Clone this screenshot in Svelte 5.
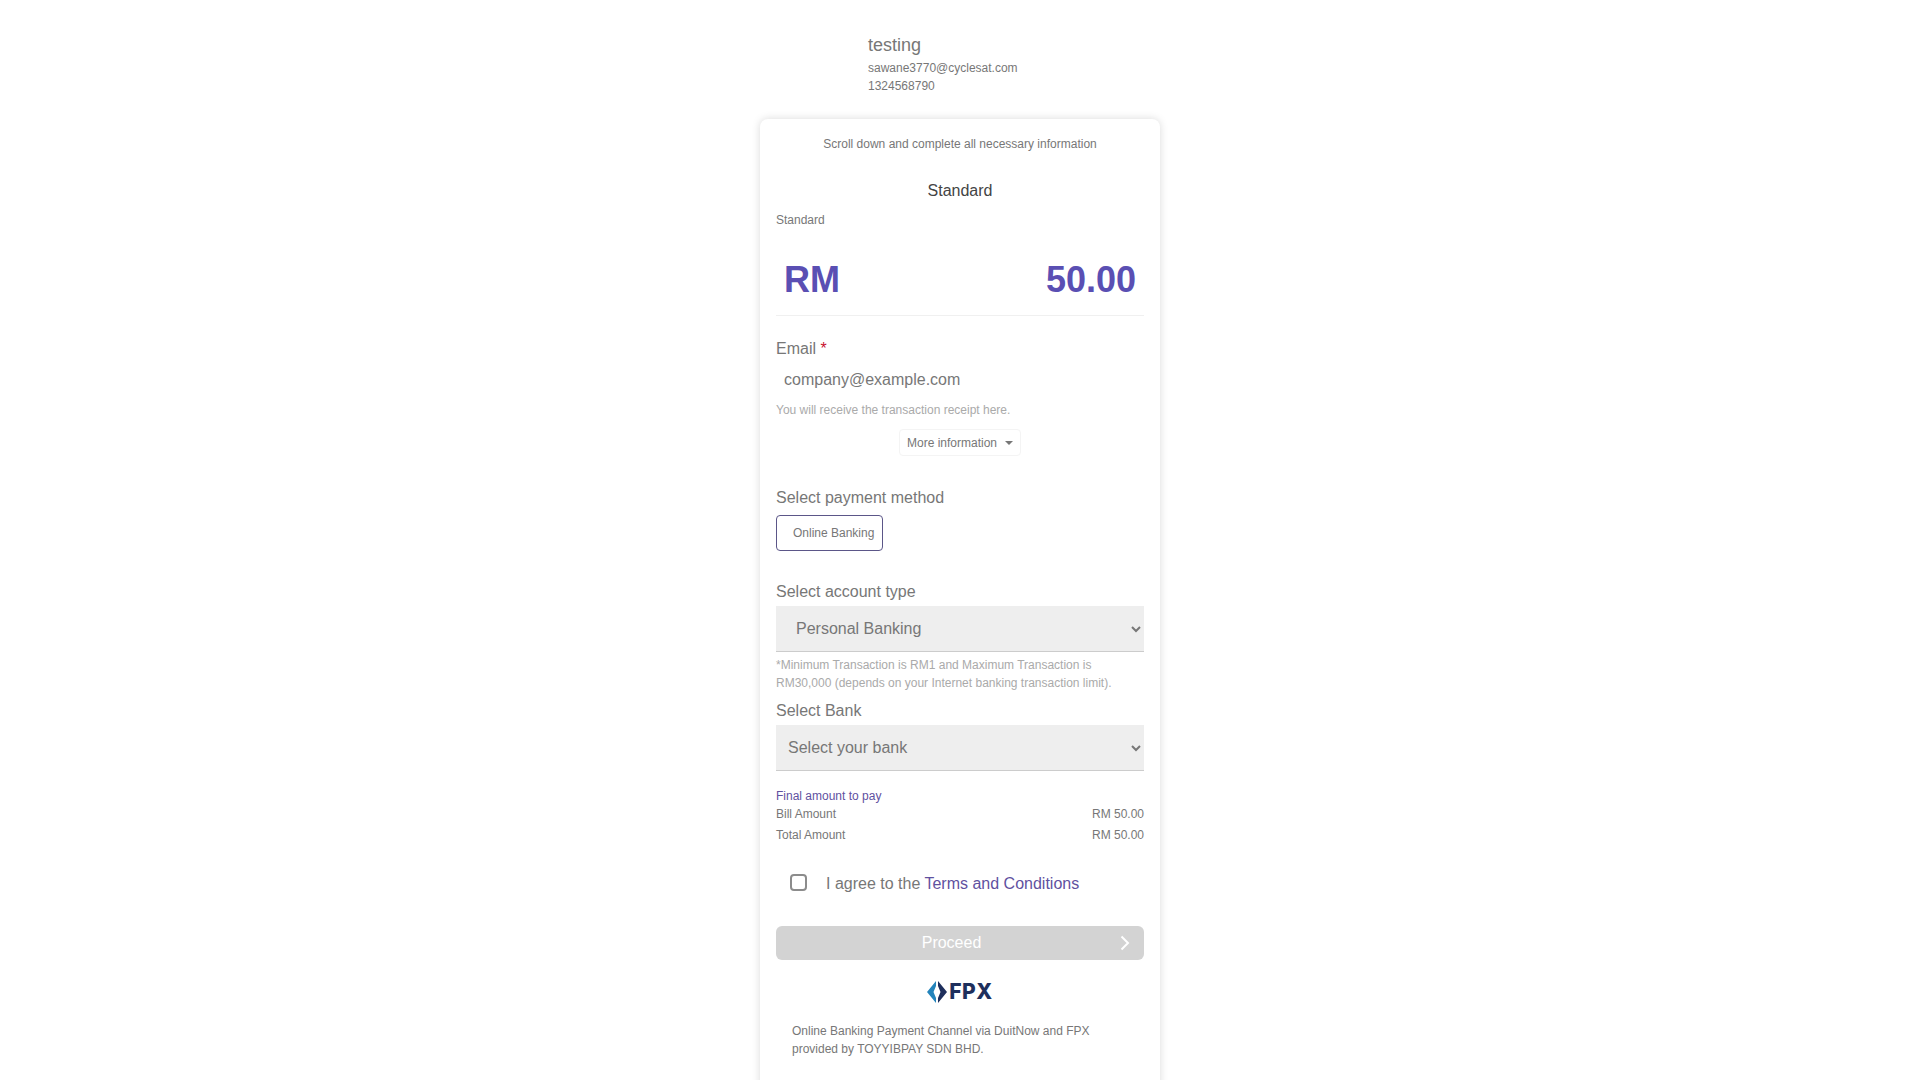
<script>
    let accountTypes = ["Personal Banking", "Corporate Banking"];
    let bills = [
        { label: "Bill Amount", amount: "RM 50.00" },
        { label: "Total Amount", amount: "RM 50.00" },
    ];
    let agreed = false;
</script>

<main class="page">
    <header class="owner">
        <div class="owner-name">testing</div>
        <div class="owner-line">sawane3770@cyclesat.com</div>
        <div class="owner-line">1324568790</div>
    </header>

    <section class="card">
        <p class="notice">Scroll down and complete all necessary information</p>
        <h2 class="title">Standard</h2>
        <p class="subtitle">Standard</p>

        <div class="price">
            <span>RM</span>
            <span>50.00</span>
        </div>

        <label class="label email-label" for="email">Email <span class="req">*</span></label>
        <input id="email" class="email" type="text" placeholder="company@example.com" />
        <p class="hint">You will receive the transaction receipt here.</p>

        <div class="more-wrap">
            <button class="more">More information<i class="caret"></i></button>
        </div>

        <div class="label method-label">Select payment method</div>
        <button class="method">Online Banking</button>

        <label class="label type-label" for="type">Select account type</label>
        <select id="type" class="select type">
            {#each accountTypes as t}
                <option>{t}</option>
            {/each}
        </select>
        <p class="hint limit">*Minimum Transaction is RM1 and Maximum Transaction is RM30,000 (depends on your Internet banking transaction limit).</p>

        <label class="label bank-label" for="bank">Select Bank</label>
        <select id="bank" class="select bank">
            <option>Select your bank</option>
        </select>

        <div class="final">Final amount to pay</div>
        {#each bills as b}
            <div class="bill">
                <span>{b.label}</span>
                <span>{b.amount}</span>
            </div>
        {/each}

        <div class="agree">
            <input id="agree" type="checkbox" bind:checked={agreed} />
            <label for="agree">I agree to the <a href="#terms">Terms and Conditions</a></label>
        </div>

        <button class="proceed" disabled={!agreed}>
            <span>Proceed</span>
            <svg class="chev" width="12" height="18" viewBox="0 0 12 18" fill="none" stroke="#fff" stroke-width="2">
                <path d="M2.5 2.5 L9 9 L2.5 15.5" />
            </svg>
        </button>

        <div class="fpx">
            <svg width="20" height="22" viewBox="0 0 20 22">
                <path d="M9 0 L9 5 L6.5 11 L9 17 L9 22 L0 11 Z" fill="#2484bb" />
                <path d="M11 0 L20 11 L11 22 L11 17 L13.5 11 L11 5 Z" fill="#1e2f5c" />
            </svg>
            <span class="fpx-text">FPX</span>
        </div>

        <p class="channel">Online Banking Payment Channel via DuitNow and FPX provided by TOYYIBPAY SDN BHD.</p>
    </section>
</main>

<style>
    :global(html),
    :global(body) {
        height: 100%;
        overflow: hidden;
        background: #fff;
    }
    .page {
        font-family: "Liberation Sans", Arial, sans-serif;
        color: #777;
        display: flex;
        flex-direction: column;
        align-items: center;
    }
    .owner {
        width: 400px;
        box-sizing: border-box;
        padding: 34px 0 0 108px;
        height: 119px;
    }
    .owner-name {
        font-size: 18px;
        line-height: 23px;
        margin-bottom: 2px;
    }
    .owner-line {
        font-size: 12px;
        line-height: 18px;
    }
    .card {
        width: 400px;
        min-height: 1000px;
        box-sizing: border-box;
        padding: 16px;
        background: #fff;
        border-radius: 8px;
        box-shadow: 0 0 8px rgba(0, 0, 0, 0.15);
    }
    p {
        margin: 0;
    }
    .notice {
        font-size: 12px;
        line-height: 18px;
        text-align: center;
    }
    .title {
        margin: 28px 0 0;
        font-size: 16px;
        font-weight: 400;
        line-height: 20px;
        text-align: center;
        color: #444;
    }
    .subtitle {
        margin-top: 9px;
        font-size: 12px;
        line-height: 20px;
    }
    .price {
        display: flex;
        justify-content: space-between;
        margin-top: 20px;
        padding: 9px 8px 14px;
        border-bottom: 1px solid #f0f0f0;
        font-size: 36px;
        font-weight: 700;
        line-height: 42px;
        color: #5a4fb3;
    }
    .label {
        display: block;
        font-size: 16px;
        line-height: 20px;
    }
    .email-label {
        margin-top: 23px;
    }
    .req {
        color: #c8102e;
    }
    .email {
        display: block;
        width: 100%;
        box-sizing: border-box;
        margin: 1px 0;
        padding: 0 8px;
        height: 40px;
        border: 0;
        outline: 0;
        background: transparent;
        font: 16px "Liberation Sans", Arial, sans-serif;
        color: #777;
    }
    .email::placeholder {
        color: #777;
        opacity: 1;
    }
    .hint {
        font-size: 12px;
        line-height: 18px;
        color: #aaa;
    }
    .more-wrap {
        display: flex;
        justify-content: center;
        margin-top: 10px;
    }
    .more {
        display: flex;
        align-items: center;
        height: 27px;
        padding: 0 7px;
        border: 1px solid #f4f4f4;
        border-radius: 4px;
        background: #fff;
        font: 12px "Liberation Sans", Arial, sans-serif;
        color: #777;
    }
    .caret {
        width: 0;
        height: 0;
        margin-left: 8px;
        border-top: 4px solid #777;
        border-left: 4px solid transparent;
        border-right: 4px solid transparent;
    }
    .method-label {
        margin-top: 32px;
    }
    .method {
        display: block;
        width: 107px;
        height: 36px;
        margin-top: 7px;
        padding: 0 0 0 16px;
        box-sizing: border-box;
        border: 1px solid #5b5688;
        border-radius: 4px;
        background: #fff;
        font: 12px "Liberation Sans", Arial, sans-serif;
        color: #777;
        text-align: left;
    }
    .type-label {
        margin-top: 31px;
    }
    .select {
        display: block;
        width: 100%;
        height: 46px;
        margin-top: 4px;
        border: 0;
        border-bottom: 1px solid #ccc;
        border-radius: 0;
        outline: 0;
        background: #eee;
        font: 16px "Liberation Sans", Arial, sans-serif;
        color: #777;
    }
    .type {
        padding-left: 16px;
    }
    .bank {
        padding-left: 8px;
    }
    .limit {
        margin-top: 4px;
    }
    .bank-label {
        margin-top: 9px;
    }
    .final {
        margin-top: 16px;
        font-size: 12px;
        line-height: 18px;
        color: #5f519f;
    }
    .bill {
        display: flex;
        justify-content: space-between;
        font-size: 12px;
        line-height: 18px;
        margin-bottom: 3px;
    }
    .agree {
        display: flex;
        align-items: center;
        margin-top: 30px;
        padding-left: 14px;
        font-size: 16px;
        line-height: 20px;
    }
    .agree input {
        appearance: none;
        width: 17px;
        height: 17px;
        margin: -4px 19px 0 0;
        box-sizing: border-box;
        border: 2px solid #8c8c8c;
        border-radius: 4px;
        background: #fff;
    }
    .agree a {
        color: #5f519f;
        text-decoration: none;
    }
    .proceed {
        position: relative;
        display: flex;
        align-items: center;
        justify-content: center;
        width: 100%;
        height: 34px;
        margin-top: 32px;
        padding: 0 17px 0 0;
        border: 0;
        border-radius: 6px;
        background: #d3d3d3;
        font: 16px "Liberation Sans", Arial, sans-serif;
        color: #fff;
    }
    .chev {
        position: absolute;
        right: 13px;
        top: 8px;
    }
    .fpx {
        display: flex;
        align-items: center;
        justify-content: center;
        gap: 2px;
        margin-top: 21px;
        height: 22px;
    }
    .fpx-text {
        font-family: Inter, "Liberation Sans", sans-serif;
        font-size: 21px;
        font-weight: 800;
        letter-spacing: 0.5px;
        line-height: 22px;
        color: #1e2f5c;
    }
    .channel {
        margin-top: 19px;
        padding: 0 16px;
        font-size: 12px;
        line-height: 18px;
    }
</style>
